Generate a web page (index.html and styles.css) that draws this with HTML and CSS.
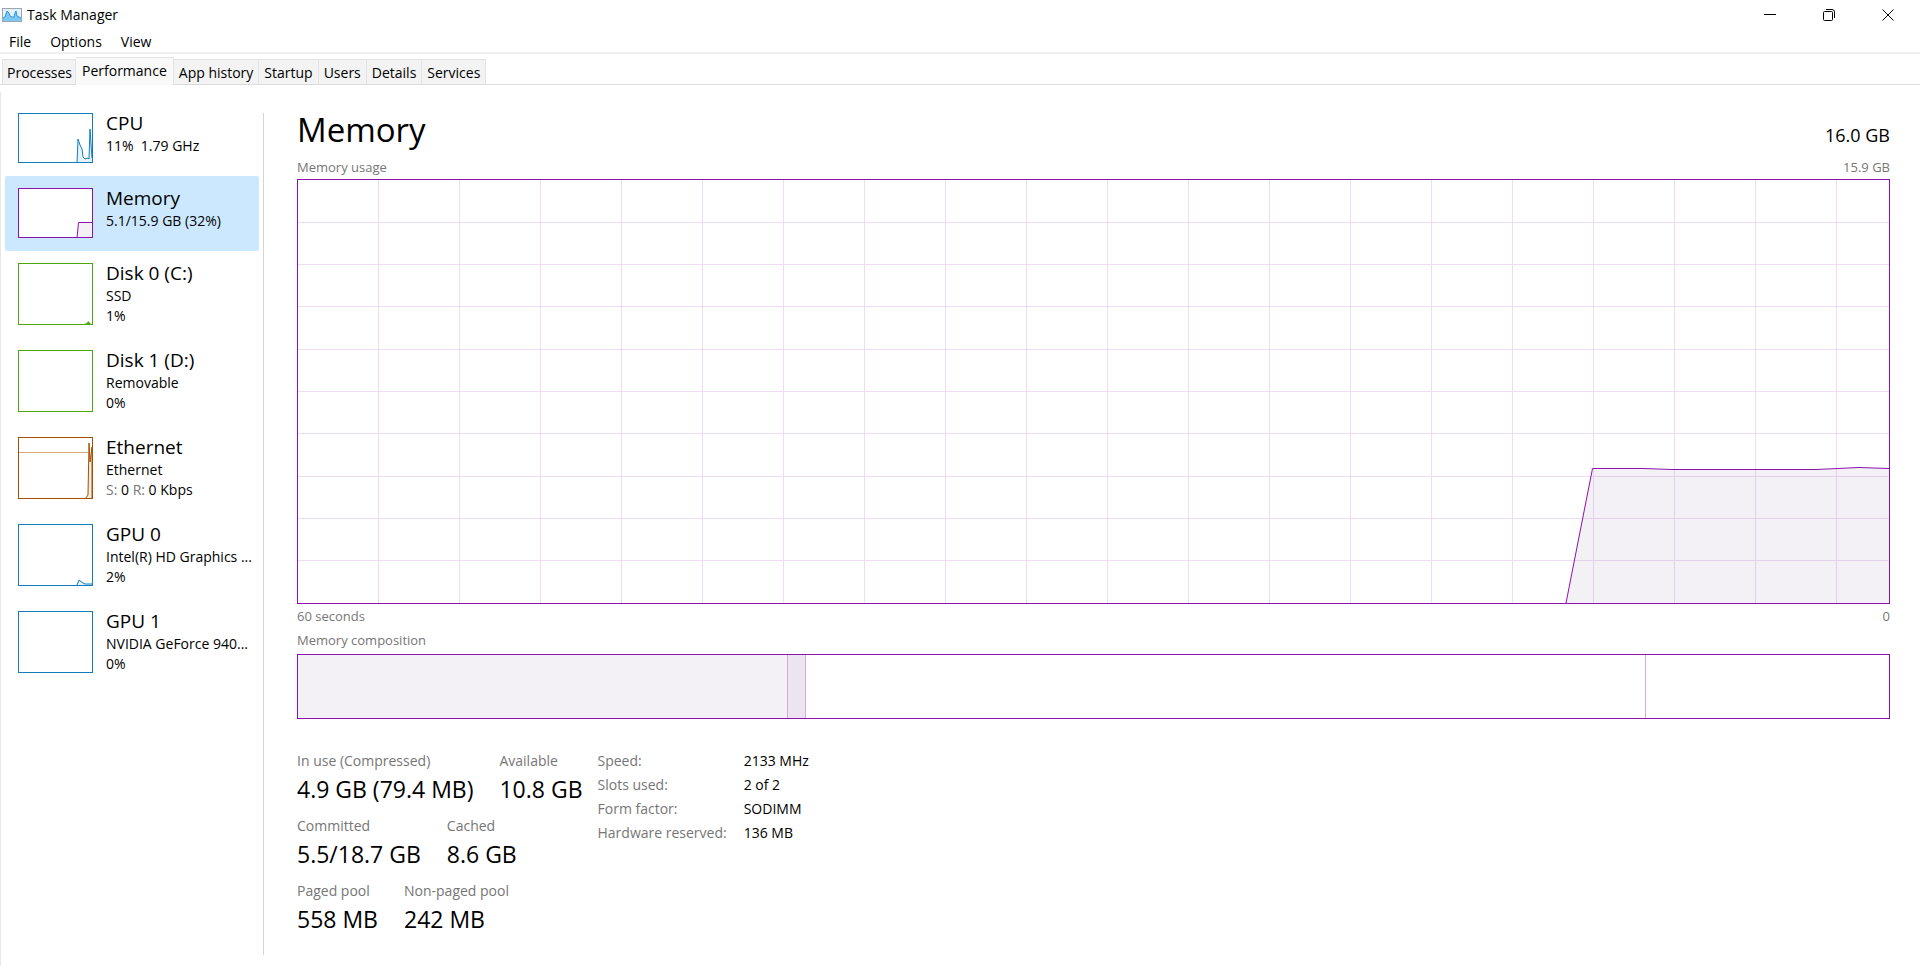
FILE: index.html
```html
<!DOCTYPE html>
<html lang="en">
<head>
    <meta charset="UTF-8">
    <meta name="viewport" content="width=device-width, initial-scale=1.0">
    <title>Task Manager</title>
    <link rel="stylesheet" href="styles.css">
</head>
<body>
    <header class="titlebar">
        <svg class="app-icon" width="20" height="14" viewBox="0 0 20 14">
            <rect x="0.5" y="0.5" width="19" height="13" fill="#e4f0f8" stroke="#9aa7b5"/>
            <path d="M1 10 L3 9 L5 3 L7 5 L8 8 L10 9 L12 9 L13 5 L14 3 L15 8 L19 10 V13 H1 Z" fill="#7cc8f4"/>
            <path d="M1 10 L3 9 L5 3 L7 5 L8 8 L10 9 L12 9 L13 5 L14 3 L15 8 L19 10" fill="none" stroke="#2b97dc"/>
        </svg>
        <span class="app-name">Task Manager</span>
        <div class="window-buttons">
            <button aria-label="Minimize">
                <svg width="12" height="12" viewBox="0 0 12 12"><path d="M0 5.5H12"/></svg>
            </button>
            <button aria-label="Restore">
                <svg width="12" height="12" viewBox="0 0 12 12"><rect x="0.5" y="2.5" width="9" height="9" rx="1"/><path d="M3 0.5H9Q11.5 0.5 11.5 3V9"/></svg>
            </button>
            <button aria-label="Close">
                <svg width="12" height="12" viewBox="0 0 12 12"><path d="M0.5 0.5L11.5 11.5M11.5 0.5L0.5 11.5"/></svg>
            </button>
        </div>
    </header>

    <nav class="menu">
        <button>File</button>
        <button>Options</button>
        <button>View</button>
    </nav>

    <div class="tabs" role="tablist">
        <button role="tab">Processes</button>
        <button role="tab" class="active" aria-selected="true">Performance</button>
        <button role="tab">App history</button>
        <button role="tab">Startup</button>
        <button role="tab">Users</button>
        <button role="tab">Details</button>
        <button role="tab">Services</button>
    </div>

    <div class="content">
        <nav class="sidebar">
            <button class="device blue">
                <svg class="thumb" width="75" height="50" viewBox="0 0 75 50">
                    <path class="area" d="M59 50 L60 26 L62 32 L64 36 L65 44 L67 46 L70 45 L71 46 L72 16 L74 45 V50 Z"/>
                    <path class="line" d="M59 50 L60 26 L62 32 L64 36 L65 44 L67 46 L70 45 L71 46 L72 16 L74 45"/>
                    <rect class="frame" x="0.5" y="0.5" width="74" height="49"/>
                </svg>
                <span class="info">
                    <span class="name">CPU</span>
                    <span class="detail">11%&nbsp; 1.79 GHz</span>
                </span>
            </button>
            <button class="device purple selected">
                <svg class="thumb" width="75" height="50" viewBox="0 0 75 50">
                    <path class="area" d="M59 50 L60.5 34.5 H75 V50 Z"/>
                    <path class="line" d="M59 50 L60.5 34.5 H75"/>
                    <rect class="frame" x="0.5" y="0.5" width="74" height="49"/>
                </svg>
                <span class="info">
                    <span class="name">Memory</span>
                    <span class="detail">5.1/15.9 GB (32%)</span>
                </span>
            </button>
            <button class="device green">
                <svg class="thumb" width="75" height="62" viewBox="0 0 75 62">
                    <path class="peak" d="M66 61 L69 60 L70 58 L72 60 L73 61 Z"/>
                    <rect class="frame" x="0.5" y="0.5" width="74" height="61"/>
                </svg>
                <span class="info">
                    <span class="name">Disk 0 (C:)</span>
                    <span class="detail">SSD</span>
                    <span class="detail">1%</span>
                </span>
            </button>
            <button class="device green">
                <svg class="thumb" width="75" height="62" viewBox="0 0 75 62">
                    <rect class="frame" x="0.5" y="0.5" width="74" height="61"/>
                </svg>
                <span class="info">
                    <span class="name">Disk 1 (D:)</span>
                    <span class="detail">Removable</span>
                    <span class="detail">0%</span>
                </span>
            </button>
            <button class="device brown">
                <svg class="thumb" width="75" height="62" viewBox="0 0 75 62">
                    <path class="limit" d="M1 15.5H70"/>
                    <path class="area" d="M69 61 L70 48 L71 6 L72 25 L74 10 V61 Z"/>
                    <path class="line" d="M68 61 L70 58 L71 6 L72 25 L74 10 V61"/>
                    <rect class="frame" x="0.5" y="0.5" width="74" height="61"/>
                </svg>
                <span class="info">
                    <span class="name">Ethernet</span>
                    <span class="detail">Ethernet</span>
                    <span class="detail"><span class="muted">S:</span> 0 <span class="muted">R:</span> 0 Kbps</span>
                </span>
            </button>
            <button class="device blue">
                <svg class="thumb" width="75" height="62" viewBox="0 0 75 62">
                    <path class="area" d="M59 61 L61 56 L65 59 L67 60 H74 V61 Z"/>
                    <path class="line" d="M59 61 L61 56 L65 59 L67 60 H74"/>
                    <rect class="frame" x="0.5" y="0.5" width="74" height="61"/>
                </svg>
                <span class="info">
                    <span class="name">GPU 0</span>
                    <span class="detail">Intel(R) HD Graphics ...</span>
                    <span class="detail">2%</span>
                </span>
            </button>
            <button class="device blue">
                <svg class="thumb" width="75" height="62" viewBox="0 0 75 62">
                    <rect class="frame" x="0.5" y="0.5" width="74" height="61"/>
                </svg>
                <span class="info">
                    <span class="name">GPU 1</span>
                    <span class="detail">NVIDIA GeForce 940...</span>
                    <span class="detail">0%</span>
                </span>
            </button>
        </nav>

        <main class="panel">
            <div class="heading">
                <h1>Memory</h1>
                <span class="total">16.0 GB</span>
            </div>
            <div class="caption">
                <span>Memory usage</span>
                <span>15.9 GB</span>
            </div>
            <svg class="chart" viewBox="0 0 1591 423" preserveAspectRatio="none">
                <path class="usage-area" d="M1268 423 L1294.5 288.5 H1346 L1374 289.5 H1518 L1561 287.5 L1591 288.5 V423 Z"/>
                <path class="grid" id="grid"/>
                <path class="usage-line" d="M1268 423 L1294.5 288.5 H1346 L1374 289.5 H1518 L1561 287.5 L1591 288.5"/>
            </svg>
            <div class="caption axis">
                <span>60 seconds</span>
                <span>0</span>
            </div>
            <div class="caption">
                <span>Memory composition</span>
            </div>
            <div class="composition">
                <div class="in-use" style="width: 30.8%"></div>
                <div class="modified" style="width: 1.1%"></div>
                <div class="standby" style="width: 52.8%"></div>
                <div class="free"></div>
            </div>

            <div class="stats">
                <div class="counters">
                    <dl>
                        <div><dt>In use (Compressed)</dt><dd>4.9 GB (79.4 MB)</dd></div>
                        <div><dt>Available</dt><dd>10.8 GB</dd></div>
                    </dl>
                    <dl>
                        <div><dt>Committed</dt><dd>5.5/18.7 GB</dd></div>
                        <div><dt>Cached</dt><dd>8.6 GB</dd></div>
                    </dl>
                    <dl>
                        <div><dt>Paged pool</dt><dd>558 MB</dd></div>
                        <div><dt>Non-paged pool</dt><dd>242 MB</dd></div>
                    </dl>
                </div>
                <table class="hardware">
                    <tr><th scope="row">Speed:</th><td>2133 MHz</td></tr>
                    <tr><th scope="row">Slots used:</th><td>2 of 2</td></tr>
                    <tr><th scope="row">Form factor:</th><td>SODIMM</td></tr>
                    <tr><th scope="row">Hardware reserved:</th><td>136 MB</td></tr>
                </table>
            </div>
        </main>
    </div>

    <script>
        // Grid lines: one column every 81 units, ten rows
        let d = "";
        for (let x = 80.5; x < 1591; x += 81) {
            d += `M${x} 0V423`;
        }
        for (let i = 1; i < 10; i++) {
            d += `M0 ${i * 42.3}H1591`;
        }
        document.getElementById("grid").setAttribute("d", d);
    </script>
</body>
</html>
```
FILE: styles.css
```css
* {
    box-sizing: border-box;
}
body {
    margin: 0;
    min-height: 100vh;
    display: flex;
    flex-direction: column;
    font-family: "Open Sans", "Noto Sans", sans-serif;
    font-size: 14px;
    line-height: 20px;
    color: #000;
    background: #fff;
}
button {
    font: inherit;
    color: inherit;
    background: none;
    border: none;
    padding: 0;
}
.titlebar {
    display: flex;
    align-items: center;
    height: 29px;
    padding: 0 3px 0 2px;
}
.app-name {
    margin-left: 5px;
}
.window-buttons {
    display: flex;
    margin-left: auto;
}
.window-buttons button {
    width: 59px;
    height: 28px;
    display: flex;
    align-items: center;
    justify-content: center;
}
.window-buttons svg {
    fill: none;
    stroke: #000;
}
.menu {
    display: flex;
    gap: 19px;
    height: 25px;
    padding: 2px 9px 0;
    border-bottom: 2px solid #f0f0f0;
}
.tabs {
    display: flex;
    align-items: flex-end;
    height: 31px;
    padding-left: 2px;
    border-bottom: 1px solid #dcdcdc;
}
.tabs button {
    height: 25px;
    padding: 2px 5px 0;
    background: #f3f3f3;
    border: 1px solid #e3e3e3;
    border-width: 1px 1px 0 0;
}
.tabs button:first-child {
    padding: 2px 3px 0 4px;
    border-left-width: 1px;
}
.tabs .active {
    height: 28px;
    margin-bottom: -1px;
    padding: 0 6px 1px;
    background: #f9f9f9;
}
.content {
    flex: 1;
    display: flex;
    margin-top: 7px;
    border-left: 1px solid #e8e8e8;
}
.sidebar {
    width: 263px;
    margin: 21px 0 11px;
    border-right: 1px solid #d4d4d4;
    flex-shrink: 0;
}
.device {
    display: flex;
    align-items: flex-start;
    gap: 13px;
    width: 254px;
    margin-left: 4px;
    padding: 12px 0 13px 13px;
    border-radius: 2px;
    text-align: left;
}
.device:first-child {
    margin-top: -12px;
}
.device.selected {
    background: #cce8ff;
}
.info {
    display: flex;
    flex-direction: column;
    height: 50px;
    white-space: nowrap;
}
.name {
    margin-bottom: 3px;
    font-size: 19px;
    line-height: 20px;
}
.detail {
    line-height: 20px;
}
.muted {
    color: #767676;
}
.thumb {
    display: block;
    background: #fff;
    fill: none;
    flex-shrink: 0;
}
.thumb .frame,
.thumb .line {
    stroke: currentColor;
}
.thumb .area {
    fill: currentColor;
    opacity: 0.1;
}
.thumb .peak {
    fill: currentColor;
}
.thumb .limit {
    stroke: #d9a77c;
}
.blue .thumb {
    color: #117dbb;
}
.purple .thumb {
    color: #8b12ae;
}
.purple .area {
    fill: #f3f1f5;
    opacity: 1;
}
.green .thumb {
    color: #4da60c;
}
.brown .thumb {
    color: #a74f01;
}
.panel {
    flex: 1;
    min-width: 0;
    display: flex;
    flex-direction: column;
    padding: 16px 30px 31px 33px;
}
.heading {
    display: flex;
    justify-content: space-between;
    align-items: flex-end;
    margin-bottom: 5px;
}
h1 {
    margin: 0;
    font-size: 33px;
    font-weight: 400;
    line-height: 44px;
}
.total {
    font-size: 18px;
    line-height: 34px;
}
.caption {
    display: flex;
    justify-content: space-between;
    padding-bottom: 2px;
    font-size: 13px;
    line-height: 20px;
    color: #767676;
}
.axis {
    padding: 2px 0 4px;
}
.chart {
    flex: 1 0 0;
    width: 100%;
    min-height: 200px;
    border: 1px solid #8b12ae;
}
.chart path {
    fill: none;
    vector-effect: non-scaling-stroke;
}
.chart .usage-area {
    fill: #f3f1f5;
}
.chart .grid {
    stroke: #8b12ae;
    stroke-opacity: 0.15;
    shape-rendering: crispEdges;
}
.chart .usage-line {
    stroke: #8b12ae;
}
.composition {
    display: flex;
    height: 65px;
    margin-top: 2px;
    border: 1px solid #8b12ae;
}
.composition div {
    border-right: 1px solid #d0acdb;
}
.in-use {
    background: #f3f1f5;
}
.modified {
    background: #ede4f2;
}
.composition .free {
    flex: 1;
    border: none;
}
.stats {
    display: flex;
    gap: 15px;
    margin-top: 30px;
}
.counters {
    display: flex;
    flex-direction: column;
    gap: 9px;
}
dl {
    display: flex;
    gap: 26px;
    margin: 0;
}
dt {
    line-height: 24px;
    color: #767676;
}
dd {
    margin: 0;
    font-size: 23px;
    line-height: 32px;
}
.hardware {
    align-self: flex-start;
    border-collapse: collapse;
    line-height: 24px;
}
.hardware th {
    padding: 0 17px 0 0;
    font-weight: 400;
    text-align: left;
    color: #767676;
}
.hardware td {
    padding: 0;
}
```
